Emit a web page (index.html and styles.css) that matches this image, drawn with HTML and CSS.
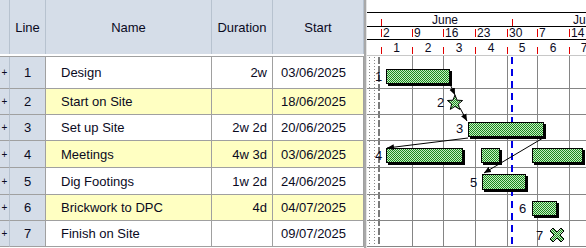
FILE: index.html
```html
<!DOCTYPE html>
<html lang="en">
<head>
    <meta charset="UTF-8">
    <meta name="viewport" content="width=device-width, initial-scale=1.0">
    <title>Project Plan | Gantt</title>
    <link rel="stylesheet" href="styles.css">
</head>
<body>
    <div class="screen">
        <!-- Task grid -->
        <div class="grid">
            <div class="grid-head">
                <div class="hcell"></div>
                <div class="hcell">Line</div>
                <div class="hcell">Name</div>
                <div class="hcell">Duration</div>
                <div class="hcell">Start</div>
            </div>
            <div class="grid-body">
                <div class="row tall">
                    <div class="exp">+</div><div class="num">1</div>
                    <div class="name">Design</div><div class="dur">2w</div><div class="start">03/06/2025</div>
                </div>
                <div class="row alt">
                    <div class="exp">+</div><div class="num">2</div>
                    <div class="name">Start on Site</div><div class="dur"></div><div class="start">18/06/2025</div>
                </div>
                <div class="row">
                    <div class="exp">+</div><div class="num">3</div>
                    <div class="name">Set up Site</div><div class="dur">2w 2d</div><div class="start">20/06/2025</div>
                </div>
                <div class="row alt wide">
                    <div class="exp">+</div><div class="num">4</div>
                    <div class="name">Meetings</div><div class="dur">4w 3d</div><div class="start">03/06/2025</div>
                </div>
                <div class="row wide">
                    <div class="exp">+</div><div class="num">5</div>
                    <div class="name">Dig Footings</div><div class="dur">1w 2d</div><div class="start">24/06/2025</div>
                </div>
                <div class="row alt">
                    <div class="exp">+</div><div class="num">6</div>
                    <div class="name">Brickwork to DPC</div><div class="dur">4d</div><div class="start">04/07/2025</div>
                </div>
                <div class="row">
                    <div class="exp">+</div><div class="num">7</div>
                    <div class="name">Finish on Site</div><div class="dur"></div><div class="start">09/07/2025</div>
                </div>
            </div>
        </div>

        <div class="splitter"></div>

        <!-- Gantt chart -->
        <svg class="chart" width="219" height="248" viewBox="367 0 219 248">
            <defs>
                <pattern id="chk" width="2" height="2" patternUnits="userSpaceOnUse">
                    <rect width="2" height="2" fill="#c4efc4"/>
                    <rect width="1" height="1" fill="#1d871d"/>
                    <rect x="1" y="1" width="1" height="1" fill="#1d871d"/>
                </pattern>
                <marker id="arr" markerWidth="8" markerHeight="8" refX="7" refY="4" orient="auto" markerUnits="userSpaceOnUse">
                    <path d="M0,1 L7,4 L0,7 z" fill="#000"/>
                </marker>
            </defs>

            <!-- timescale -->
            <g class="rules">
                <line x1="367" y1="12.5" x2="586" y2="12.5"/>
                <line x1="367" y1="26.5" x2="586" y2="26.5"/>
                <line x1="367" y1="39.5" x2="586" y2="39.5"/>
            </g>
            <g class="ticks">
                <line x1="381.5" y1="19" x2="381.5" y2="26"/>
                <line x1="512.5" y1="19" x2="512.5" y2="26"/>

                <line x1="381.5" y1="29" x2="381.5" y2="37"/>
                <line x1="412.5" y1="29" x2="412.5" y2="37"/>
                <line x1="443.5" y1="29" x2="443.5" y2="37"/>
                <line x1="475.5" y1="29" x2="475.5" y2="37"/>
                <line x1="507.5" y1="29" x2="507.5" y2="37"/>
                <line x1="537.5" y1="29" x2="537.5" y2="37"/>
                <line x1="569.5" y1="29" x2="569.5" y2="37"/>

                <line x1="381.5" y1="47" x2="381.5" y2="54"/>
                <line x1="412.5" y1="47" x2="412.5" y2="54"/>
                <line x1="443.5" y1="47" x2="443.5" y2="54"/>
                <line x1="475.5" y1="47" x2="475.5" y2="54"/>
                <line x1="507.5" y1="47" x2="507.5" y2="54"/>
                <line x1="537.5" y1="47" x2="537.5" y2="54"/>
                <line x1="569.5" y1="47" x2="569.5" y2="54"/>
            </g>
            <g class="scale-text">
                <text x="445" y="24" text-anchor="middle">June</text>
                <text x="573" y="24">July</text>

                <text x="383" y="37">2</text>
                <text x="414" y="37">9</text>
                <text x="445" y="37">16</text>
                <text x="477" y="37">23</text>
                <text x="509" y="37">30</text>
                <text x="539" y="37">7</text>
                <text x="571" y="37">14</text>

                <text x="396.5" y="52" text-anchor="middle">1</text>
                <text x="428" y="52" text-anchor="middle">2</text>
                <text x="459" y="52" text-anchor="middle">3</text>
                <text x="491" y="52" text-anchor="middle">4</text>
                <text x="522" y="52" text-anchor="middle">5</text>
                <text x="553" y="52" text-anchor="middle">6</text>
                <text x="584" y="52" text-anchor="middle">7</text>
            </g>
            <line class="head-base" x1="367" y1="55.5" x2="586" y2="55.5"/>

            <!-- body grid -->
            <g class="dots">
                <line x1="369.5" y1="57" x2="369.5" y2="247"/>
                <line x1="374.5" y1="57" x2="374.5" y2="247"/>
            </g>
            <line class="start-line" x1="379" y1="57" x2="379" y2="247"/>
            <g class="grid-lines">
                <line x1="412.5" y1="56" x2="412.5" y2="247"/>
                <line x1="443.5" y1="56" x2="443.5" y2="247"/>
                <line x1="475.5" y1="56" x2="475.5" y2="247"/>
                <line x1="507.5" y1="56" x2="507.5" y2="247"/>
                <line x1="537.5" y1="56" x2="537.5" y2="247"/>
                <line x1="569.5" y1="56" x2="569.5" y2="247"/>

                <line x1="367" y1="88.5" x2="586" y2="88.5"/>
                <line x1="367" y1="114.5" x2="586" y2="114.5"/>
                <line x1="367" y1="140.5" x2="586" y2="140.5"/>
                <line x1="367" y1="167.5" x2="586" y2="167.5"/>
                <line x1="367" y1="194.5" x2="586" y2="194.5"/>
                <line x1="367" y1="220.5" x2="586" y2="220.5"/>
                <line x1="367" y1="246.5" x2="586" y2="246.5"/>
            </g>
            <line class="today" x1="512" y1="57" x2="512" y2="247"/>

            <!-- task bars -->
            <g class="shadows">
                <rect x="388" y="71" width="64" height="15"/>
                <rect x="470" y="124" width="76" height="15"/>
                <rect x="388" y="150" width="77" height="15"/>
                <rect x="483" y="150" width="19" height="15"/>
                <rect x="534" y="150" width="51" height="15"/>
                <rect x="484" y="176" width="44" height="16"/>
                <rect x="534" y="203" width="25" height="15"/>
            </g>
            <g class="bars">
                <rect x="386.5" y="69.5" width="63" height="14"/>
                <rect x="468.5" y="122.5" width="75" height="14"/>
                <rect x="386.5" y="148.5" width="76" height="14"/>
                <rect x="481.5" y="148.5" width="18" height="14"/>
                <rect x="532.5" y="148.5" width="50" height="14"/>
                <rect x="482.5" y="174.5" width="43" height="15"/>
                <rect x="532.5" y="201.5" width="24" height="14"/>
            </g>

            <!-- milestones -->
            <polygon class="mile" points="455,95 457.1,100.2 462.6,100.5 458.4,104 459.7,109.4 455,106.4 450.3,109.4 451.6,104 447.4,100.5 452.9,100.2"/>
            <polygon class="mile" points="553,228 557,232 561,228 564,231 560,235 564,239 561,242 557,238 553,242 550,239 554,235 550,231"/>

            <!-- links -->
            <g class="links">
                <line x1="450" y1="84" x2="455" y2="95"/>
                <line x1="460" y1="108" x2="467" y2="121"/>
                <line x1="468" y1="138" x2="387" y2="148"/>
                <line x1="543" y1="138" x2="484" y2="173"/>
            </g>

            <!-- bar labels -->
            <g class="labels">
                <text x="375" y="81">1</text>
                <text x="437" y="107">2</text>
                <text x="456" y="133">3</text>
                <text x="375" y="160">4</text>
                <text x="470" y="187">5</text>
                <text x="519" y="213">6</text>
                <text x="536" y="240">7</text>
            </g>
        </svg>
    </div>
</body>
</html>
```

FILE: styles.css
```css
* {
    margin: 0;
    padding: 0;
    box-sizing: border-box;
}
body {
    font-family: "Liberation Sans", Arial, sans-serif;
    font-size: 13px;
    color: #0a0a1e;
    background: #fff;
}
.screen {
    display: flex;
    width: 586px;
    height: 248px;
    overflow: hidden;
}
.grid {
    width: 364px;
    flex: none;
}
.grid-head,
.row {
    display: grid;
    grid-template-columns: 10px 36px 166px 61px 91px;
}
.grid-head {
    height: 56px;
    border-bottom: 2px solid #fff;
}
.hcell {
    display: flex;
    align-items: center;
    justify-content: center;
    background: #d5dde8;
    border-right: 1px solid #b7c2cf;
}
.grid-body {
    border-top: 1px solid #a0a0a0;
}
.row {
    height: 26px;
}
.row.tall {
    height: 32px;
}
.row.wide {
    height: 27px;
}
.row > div {
    display: flex;
    align-items: center;
    border-bottom: 1px solid #a0a0a0;
    border-right: 1px solid #a0a0a0;
    white-space: nowrap;
}
.row .exp {
    justify-content: center;
    font-size: 10px;
    background: #d5dde8;
    border-right-color: #b7c2cf;
}
.row .num {
    justify-content: center;
    background: #d5dde8;
}
.row .name {
    padding-left: 15px;
}
.row .dur {
    justify-content: flex-end;
    padding-right: 5px;
}
.row .start {
    padding-left: 8px;
}
.row.alt .name,
.row.alt .dur,
.row.alt .start {
    background: #ffffc2;
}
.splitter {
    width: 3px;
    flex: none;
    background: #e4e4e4;
    border-left: 2px solid #a8a8a8;
}
.chart {
    display: block;
    flex: none;
    background: #fff;
}
.chart text {
    font-family: "Liberation Sans", Arial, sans-serif;
    font-size: 12px;
    fill: #0a0a1e;
}
.rules line {
    stroke: #000;
    stroke-width: 1;
}
.ticks line {
    stroke: #e00000;
    stroke-width: 1;
}
.head-base {
    stroke: #c8c8c8;
}
.dots line {
    stroke: #8a8a8a;
    stroke-dasharray: 1 2;
}
.start-line {
    stroke: #7a7a7a;
    stroke-width: 2;
    stroke-dasharray: 7 2;
}
.grid-lines line {
    stroke: #858585;
    shape-rendering: crispEdges;
}
.today {
    stroke: #0000e6;
    stroke-width: 2;
    stroke-dasharray: 7 5;
}
.shadows rect {
    fill: #000;
}
.bars rect {
    fill: url(#chk);
    stroke: #000;
    stroke-width: 1;
}
.mile {
    fill: url(#chk);
    stroke: #000;
    stroke-width: 1;
}
.links line {
    stroke: #000;
    stroke-width: 1;
    marker-end: url(#arr);
}
.labels text {
    font-size: 13px;
}
```
